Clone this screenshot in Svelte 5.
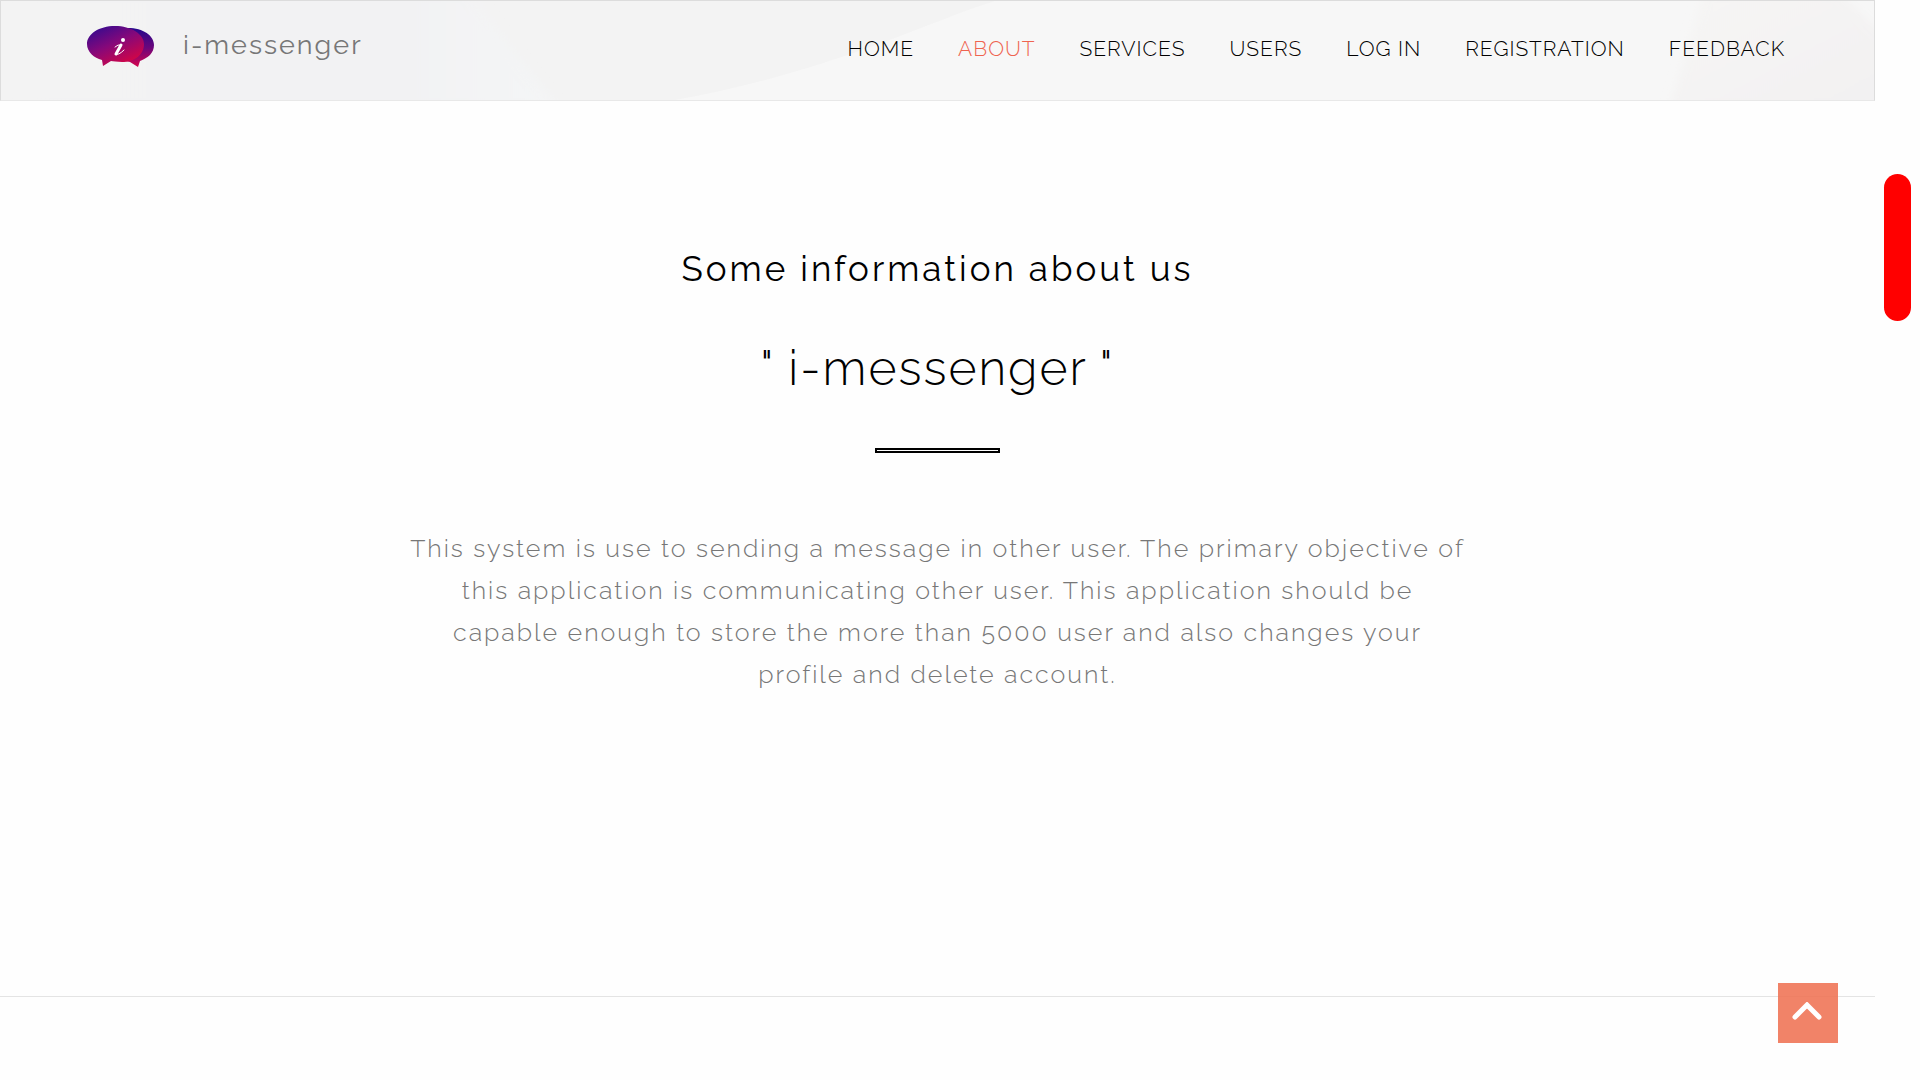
<script>
  const links = ['Home', 'About', 'Services', 'Users', 'Log in', 'Registration', 'Feedback'];
  let active = $state('About');
</script>

<div class="page">
  <div class="content">
    <header>
      <svg class="backdrop" viewBox="0 0 1875 100" preserveAspectRatio="none" aria-hidden="true">
        <defs>
          <linearGradient id="cool" x1="0" x2="1" y1="0" y2="0">
            <stop offset="0" stop-color="#f3f3f3" />
            <stop offset="0.7" stop-color="#f2f2f3" />
            <stop offset="1" stop-color="#f4f5f6" />
          </linearGradient>
          <linearGradient id="warm" x1="0" x2="1" y1="0" y2="1">
            <stop offset="0" stop-color="#f6f5f4" />
            <stop offset="1" stop-color="#f2f1f2" />
          </linearGradient>
          <filter id="soft"><feGaussianBlur stdDeviation="5" /></filter>
        </defs>
        <rect width="1875" height="100" fill="#f7f7f7" />
        <path d="M0 0H995C930 20 830 72 675 100H0Z" fill="#f3f3f3" />
        <path d="M0 -10H470Q510 50 560 110H0Z" fill="url(#cool)" filter="url(#soft)" />
        <path d="M1705 -10H1840L1890 40V110H1670Z" fill="url(#warm)" filter="url(#soft)" />
      </svg>
      <a class="brand" href="#home">
        <svg class="logo" viewBox="0 0 68 42" aria-hidden="true">
          <defs>
            <linearGradient id="back" x1="0" x2="0" y1="0" y2="1">
              <stop offset="0" stop-color="#24088c" />
              <stop offset="0.5" stop-color="#6a067c" />
              <stop offset="1" stop-color="#d6044c" />
            </linearGradient>
            <linearGradient id="front" x1="0.15" x2="0.8" y1="0" y2="1">
              <stop offset="0" stop-color="#330b90" />
              <stop offset="0.45" stop-color="#86087a" />
              <stop offset="1" stop-color="#e0053c" />
            </linearGradient>
          </defs>
          <path d="M38 2C55 1 67 9 67 19C67 27 61 32 53 35L51 41L43 36C31 34 20 29 20 19C20 9 27 3 38 2Z" fill="url(#back)" />
          <path d="M28 0C44 0 57 8 57 18C57 29 47 36 35 36C30 36 26 35 24 35L16 40L15 34C7 32 0 26 0 18C0 8 12 0 28 0Z" fill="url(#front)" />
          <circle cx="36" cy="14" r="2" fill="#fff" />
          <path d="M28 21Q31 18 34 19M29 28Q31 30 37 24" fill="none" stroke="#fff" stroke-width="1" stroke-linecap="round" />
          <path d="M34 19L29 28" stroke="#fff" stroke-width="3" stroke-linecap="round" />
        </svg>
        <span>i-messenger</span>
      </a>
      <nav>
        {#each links as link}
          <a href="#{link}" class:active={active === link} onclick={() => (active = link)}>{link}</a>
        {/each}
      </nav>
    </header>

    <section id="About">
      <h1>Some information about us</h1>
      <h2>" i-messenger "</h2>
      <div class="rule"></div>
      <p>
        This system is use to sending a message in other user. The primary objective of<br />
        this application is communicating other user. This application should be<br />
        capable enough to store the more than 5000 user and also changes your<br />
        profile and delete account.
      </p>
    </section>
  </div>
  <div class="track"><div class="thumb"></div></div>
  <button class="top" aria-label="Back to top">
    <svg viewBox="0 0 30 18" aria-hidden="true">
      <path d="M3 15L15 3L27 15" fill="none" stroke="#fff" stroke-width="5" stroke-linecap="round" />
    </svg>
  </button>
</div>

<style>
  :global(body) { margin: 0; background: #fefefe; }
  .page {
    display: flex;
    min-height: 100vh;
    font-family: Raleway, Lato, "Open Sans", sans-serif;
    color: #000;
  }
  .content { flex: 1; }
  header {
    position: relative;
    display: flex;
    justify-content: space-between;
    align-items: flex-start;
    box-sizing: border-box;
    height: 101px;
    padding: 0 89px 0 86px;
    border: 1px solid #dcdcdc;
    border-bottom-color: #e8e8e8;
  }
  .backdrop { position: absolute; inset: 0; width: 100%; height: 100%; }
  .brand, nav { position: relative; }
  .brand {
    display: flex;
    align-items: center;
    gap: 28px;
    margin-top: 23px;
    color: #777;
    font-size: 27px;
    line-height: 42px;
    letter-spacing: 2px;
    text-decoration: none;
  }
  .logo { width: 68px; height: 42px; }
  .brand span { padding-bottom: 4px; }
  nav { display: flex; gap: 44px; margin-top: 34px; }
  nav a {
    color: #000;
    font-size: 21px;
    font-weight: 300;
    line-height: 28px;
    letter-spacing: 1px;
    text-decoration: none;
    text-transform: uppercase;
  }
  nav a.active { color: #ef6450; }
  section {
    box-sizing: border-box;
    min-height: 896px;
    padding: 144px 24px 0;
    border-bottom: 1px solid #e4e4e4;
    text-align: center;
  }
  h1 { margin: 0; font-size: 35px; font-weight: 400; line-height: 48px; letter-spacing: 3px; }
  h2 { margin: 43px 0 0; font-size: 48px; font-weight: 300; line-height: 64px; letter-spacing: 2px; }
  .rule {
    box-sizing: border-box;
    width: 125px;
    height: 5px;
    margin: 48px auto 0;
    border: 2px solid #000;
  }
  p {
    margin: 74px 0 0;
    color: #777;
    font-size: 25px;
    font-weight: 300;
    line-height: 42px;
    letter-spacing: 2px;
  }
  .track { flex: none; width: 45px; }
  .thumb { width: 27px; height: 147px; margin: 174px 9px 0; border-radius: 14px; background: #f00; }
  .top {
    position: fixed;
    right: 82px;
    bottom: 37px;
    display: flex;
    justify-content: center;
    width: 60px;
    height: 60px;
    padding: 19px 2px 0 0;
    border: 0;
    background: rgba(239, 112, 82, 0.87);
    cursor: pointer;
  }
  .top svg { width: 30px; height: 18px; }
</style>
